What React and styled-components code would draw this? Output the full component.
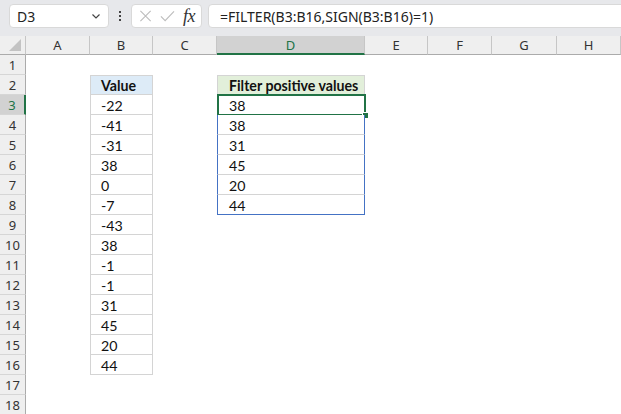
import React from 'react';
import styled, { createGlobalStyle } from 'styled-components';

const Global = createGlobalStyle`
  html, body { margin: 0; padding: 0; background: #fff; overflow: hidden; }
  #root { width: 621px; height: 414px; }
`;

const GREEN = '#217346';
const BLUE = '#4472c4';
const LINE = '#d4d4d4';

const Page = styled.div`
  width: 621px;
  height: 414px;
  overflow: hidden;
  display: flex;
  flex-direction: column;
  font-family: "Segoe UI", "Noto Sans", "Open Sans", sans-serif;
`;

const Toolbar = styled.div`
  flex: none;
  height: 36px;
  box-sizing: border-box;
  background: #e7e8eb;
  display: flex;
  align-items: flex-start;
  padding: 4px 0 0 9px;
`;

const Box = styled.div`
  height: 24px;
  box-sizing: border-box;
  background: #fff;
  border: 1px solid #d9d9d9;
  border-radius: 4px;
  display: flex;
  align-items: center;
`;

const NameBox = styled(Box)`
  width: 100px;
  padding: 0 6px 0 7px;
  justify-content: space-between;
  font-size: 14px;
  color: #222;
`;

const Dots = styled.div`
  width: 22px;
  height: 24px;
  display: flex;
  flex-direction: column;
  align-items: center;
  justify-content: center;
  gap: 2px;
  & > span { width: 2px; height: 2px; background: #444; }
`;

const FxBox = styled(Box)`
  width: 71px;
  padding: 0 6px 0 7px;
  gap: 8px;
`;

const FxText = styled.span`
  font-family: "Liberation Serif", "DejaVu Serif", serif;
  font-style: italic;
  font-size: 18px;
  color: #333;
  margin-left: auto;
  letter-spacing: -0.5px;
`;

const FormulaBox = styled(Box)`
  flex: 1;
  margin-left: 6px;
  margin-right: -10px;
  padding-left: 11px;
  font-size: 14px;
  color: #222;
  white-space: nowrap;
`;

const Sheet = styled.div`
  display: grid;
  grid-template-columns: 26px 64px 63px 64px 148px 63px 64px 65px 64px;
  grid-template-rows: 19px repeat(18, 20px);
`;

const Corner = styled.div`
  background: #efefef;
  border-right: 1px solid #c6c6c6;
  border-bottom: 1px solid #ababab;
  box-sizing: border-box;
  position: relative;
  &::after {
    content: '';
    position: absolute;
    right: 4px;
    bottom: 3px;
    border-style: solid;
    border-width: 0 0 12px 12px;
    border-color: transparent transparent #c3c3c3 transparent;
  }
`;

const ColHead = styled.div`
  box-sizing: border-box;
  background: ${p => (p.$sel ? '#d2d2d2' : '#efefef')};
  border-right: 1px solid #c6c6c6;
  border-bottom: ${p => (p.$sel ? `2px solid ${GREEN}` : '1px solid #ababab')};
  display: flex;
  align-items: center;
  justify-content: center;
  font-size: 13px;
  color: ${p => (p.$sel ? GREEN : '#333')};
`;

const RowHead = styled.div`
  box-sizing: border-box;
  background: ${p => (p.$sel ? '#d2d2d2' : '#efefef')};
  border-right: ${p => (p.$sel ? `2px solid ${GREEN}` : '1px solid #ababab')};
  border-bottom: 1px solid #d6d6d6;
  display: flex;
  align-items: center;
  justify-content: center;
  font-size: 13px;
  color: ${p => (p.$sel ? GREEN : '#333')};
`;

const Cell = styled.div`
  box-sizing: border-box;
  position: relative;
  font-family: "Lato", "Open Sans", sans-serif;
  font-size: 14.2px;
  color: #111;
  line-height: 18px;
  padding: 2px 0 0 11px;
  white-space: nowrap;
`;

const TableCell = styled(Cell)`
  background: ${p => (p.$head === 'blue' ? '#ddebf7' : p.$head === 'green' ? '#e2efda' : '#fff')};
  font-weight: ${p => (p.$head ? 700 : 400)};
  border-left: 1px solid ${p => (p.$spill ? BLUE : LINE)};
  border-right: 1px solid ${p => (p.$spill ? BLUE : LINE)};
  border-bottom: 1px solid ${p => (p.$last ? BLUE : LINE)};
  border-top: ${p => (p.$head ? `1px solid ${LINE}` : 'none')};
  padding-top: ${p => (p.$head ? 1 : 2)}px;
  padding-left: ${p => (p.$wide ? 11 : 10)}px;
`;

const Selection = styled.div`
  position: absolute;
  top: -1px;
  left: -1px;
  right: -2px;
  bottom: -2px;
  border: 2px solid ${GREEN};
  pointer-events: none;
`;

const Handle = styled.div`
  position: absolute;
  right: -4px;
  bottom: -4px;
  width: 5px;
  height: 5px;
  background: ${GREEN};
  outline: 1px solid #fff;
`;

const cols = ['A', 'B', 'C', 'D', 'E', 'F', 'G', 'H'];
const bVals = ['Value', '-22', '-41', '-31', '38', '0', '-7', '-43', '38', '-1', '-1', '31', '45', '20', '44'];
const dVals = ['Filter positive values', '38', '38', '31', '45', '20', '44'];

const Chevron = () => (
  <svg width="12" height="12" viewBox="0 0 12 12" fill="none">
    <path d="M2.5 4.5 L6 8 L9.5 4.5" stroke="#444" strokeWidth="1.2" />
  </svg>
);

const Cross = () => (
  <svg width="14" height="14" viewBox="0 0 14 14" fill="none">
    <path d="M1.5 1.5 L12.5 12.5 M12.5 1.5 L1.5 12.5" stroke="#bdbdbd" strokeWidth="1.2" />
  </svg>
);

const Check = () => (
  <svg width="16" height="14" viewBox="0 0 16 14" fill="none">
    <path d="M1 7.5 L5.5 12 L15 2" stroke="#bdbdbd" strokeWidth="1.2" />
  </svg>
);

function renderCell(r, c) {
  const key = `${c}${r}`;
  if (c === 'B' && r >= 2 && r <= 16) {
    const v = bVals[r - 2];
    return (
      <TableCell key={key} $head={r === 2 ? 'blue' : undefined}>
        {v}
      </TableCell>
    );
  }
  if (c === 'D' && r >= 2 && r <= 8) {
    const v = dVals[r - 2];
    return (
      <TableCell
        key={key}
        $wide
        $head={r === 2 ? 'green' : undefined}
        $spill={r >= 3}
        $last={r === 8}
      >
        {v}
        {r === 3 && (
          <Selection>
            <Handle />
          </Selection>
        )}
      </TableCell>
    );
  }
  return <Cell key={key} />;
}

export default function App() {
  const rows = Array.from({ length: 18 }, (_, i) => i + 1);
  return (
    <Page>
      <Global />
      <Toolbar>
        <NameBox>
          <span>D3</span>
          <Chevron />
        </NameBox>
        <Dots>
          <span />
          <span />
          <span />
        </Dots>
        <FxBox>
          <Cross />
          <Check />
          <FxText>fx</FxText>
        </FxBox>
        <FormulaBox>=FILTER(B3:B16,SIGN(B3:B16)=1)</FormulaBox>
      </Toolbar>
      <Sheet>
        <Corner />
        {cols.map(c => (
          <ColHead key={c} $sel={c === 'D'}>
            {c}
          </ColHead>
        ))}
        {rows.map(r => (
          <React.Fragment key={r}>
            <RowHead $sel={r === 3}>{r}</RowHead>
            {cols.map(c => renderCell(r, c))}
          </React.Fragment>
        ))}
      </Sheet>
    </Page>
  );
}
